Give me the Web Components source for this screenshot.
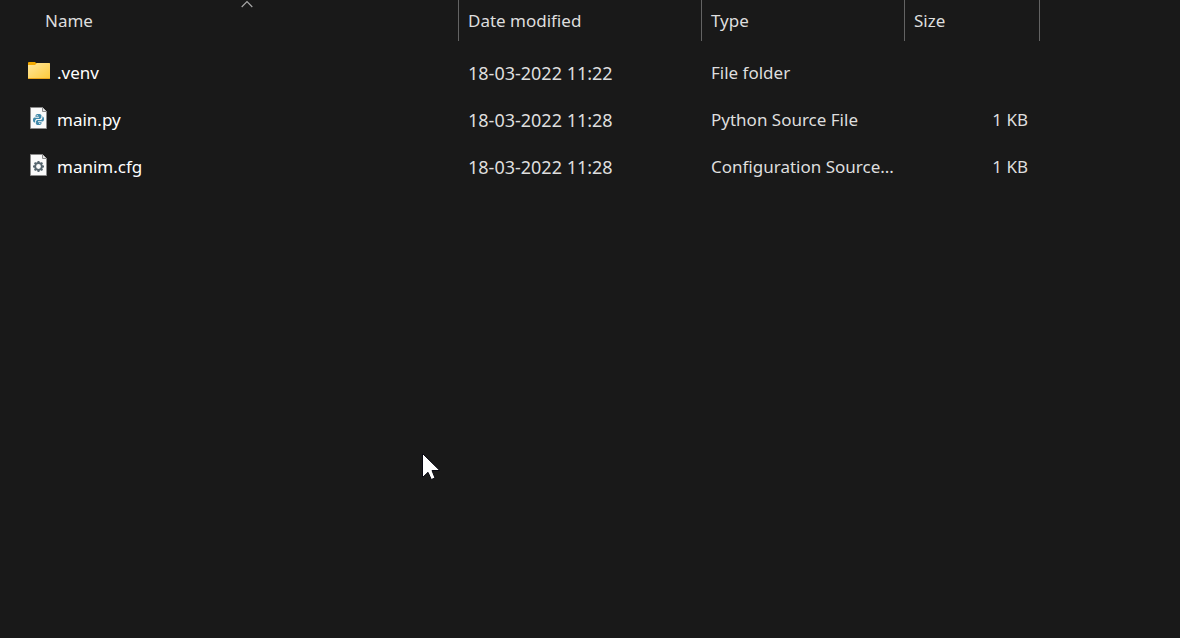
<!DOCTYPE html>
<html lang="en">
<head>
<meta charset="utf-8">
<title>File list</title>
<style>
  html { background: #191919; color-scheme: dark; }
  body { margin: 0; }
</style>
</head>
<body>
<file-browser></file-browser>

<template id="browser-template">
  <style>
    :host {
      display: flex;
      flex-direction: column;
      box-sizing: border-box;
      min-height: 100vh;
      position: relative;
      overflow: hidden;
      background: #191919;
      color: #dedede;
      font: 17px/24px "Noto Sans", "Open Sans", sans-serif;
    }
    mouse-pointer { position: absolute; left: 422px; top: 453px; }
    table { width: 100%; table-layout: fixed; border-collapse: separate; border-spacing: 0; }
    .name { width: 459px; }
    .date { width: 243px; }
    .type { width: 203px; }
    .size { width: 135px; }
    th, td { box-sizing: border-box; padding: 0 10px 0 9px; text-align: left; font-weight: 400; white-space: nowrap; }
    thead th, thead td { height: 41px; padding: 0; }
    tbody td { height: 47px; }
    tbody td:first-child { padding-left: 27px; color: #fff; }
    tbody td:nth-child(2) { font-size: 18px; }
    tbody td:nth-child(4) { text-align: right; padding-right: 12px; }
    tbody::before { content: ""; display: block; height: 8px; }
  </style>
  <table>
    <colgroup><col class="name"><col class="date"><col class="type"><col class="size"><col></colgroup>
    <thead>
      <tr>
        <th scope="col" aria-sort="ascending"><column-header sorted>Name</column-header></th>
        <th scope="col"><column-header>Date modified</column-header></th>
        <th scope="col"><column-header>Type</column-header></th>
        <th scope="col"><column-header>Size</column-header></th>
        <td></td>
      </tr>
    </thead>
    <tbody>
      <tr><td><file-name kind="folder">.venv</file-name></td><td>18-03-2022 11:22</td><td>File folder</td><td></td><td></td></tr>
      <tr><td><file-name kind="python">main.py</file-name></td><td>18-03-2022 11:28</td><td>Python Source File</td><td>1 KB</td><td></td></tr>
      <tr><td><file-name kind="config">manim.cfg</file-name></td><td>18-03-2022 11:28</td><td>Configuration Source...</td><td>1 KB</td><td></td></tr>
    </tbody>
  </table>
  <mouse-pointer></mouse-pointer>
</template>

<template id="header-template">
  <style>
    :host { display: block; position: relative; height: 41px; box-sizing: border-box; border-right: 1px solid #636363; }
    button { display: block; width: 100%; height: 100%; padding: 0 9px; border: 0; background: none; color: inherit; font: inherit; text-align: left; }
    :host([sorted]) button { padding-left: 45px; }
    svg { display: none; position: absolute; top: 0; left: 50%; width: 12px; height: 8px; margin-left: 12px; }
    :host([sorted]) svg { display: block; }
  </style>
  <button type="button"><slot></slot></button>
  <svg viewBox="0 0 12 8" fill="none" stroke="#a8a8a8" stroke-width="1.2" aria-hidden="true"><path d="M.7 7 6 1.7 11.3 7"/></svg>
</template>

<template id="name-template">
  <style>
    :host { display: flex; align-items: center; gap: 6px; }
    svg { flex: none; width: 24px; height: 24px; margin-bottom: 4px; }
  </style>
  <svg viewBox="0 0 24 24" aria-hidden="true"></svg>
  <slot></slot>
</template>

<script>
  const PAGE = `
    <path d="M3.5 1.5H15.5L19.5 5.5V22.5H3.5Z" fill="#fafafa" stroke="#8a8a8a"/>
    <path d="M15.5 1.5V5.5H19.5" fill="#e4e4e4" stroke="#8a8a8a"/>`;

  const ICONS = {
    folder: `
      <defs><linearGradient id="g" x1="0" y1="0" x2="1" y2="1">
        <stop offset="0" stop-color="#ffe79d"/><stop offset="1" stop-color="#ffca3a"/>
      </linearGradient></defs>
      <path d="M1 4Q1 3 2 3H8L9 4H22Q23 4 23 5V11H1Z" fill="#f2a900"/>
      <path d="M1 6H8L10 4H22Q23 4 23 5V19Q23 20 22 20H2Q1 20 1 19Z" fill="url(#g)"/>
      <path d="M1 19H23Q23 20 22 20H2Q1 20 1 19Z" fill="#eda51c"/>`,
    python: PAGE + `
      <g fill="#4089aa">
        <path d="M11.5 8C9.5 8 8.5 8.6 8.5 10V11H12V11.5H7.5C6.5 11.5 6 12.4 6 14S6.6 16.5 7.5 16.5H8.3V15C8.3 13.6 9 13 10.3 13H12.7C13.8 13 14.5 12.4 14.5 11.3V10C14.5 8.6 13.5 8 11.5 8Z"/>
        <path d="M11.5 19C13.5 19 14.5 18.4 14.5 17V16H11V15.5H15.5C16.5 15.5 17 14.6 17 13S16.4 10.5 15.5 10.5H15.2V12C15.2 13.4 14.3 14 13.2 14H10.6C9.5 14 8.8 14.6 8.8 15.7V17C8.8 18.4 9.5 19 11.5 19Z"/>
      </g>
      <path d="M8.4 11.2H12M11 15.8H14.6M8.6 16.8V15.4Q8.6 13.5 10.6 13.5H12.7Q14.9 13.5 14.9 11.6V10.4" fill="none" stroke="#fafafa" stroke-width=".7"/>
      <g fill="#fff"><circle cx="10.2" cy="9.6" r=".6"/><circle cx="12.8" cy="17.4" r=".6"/></g>`,
    config: PAGE + `
      <circle cx="11.5" cy="13.5" r="3.4" fill="none" stroke="#56656e" stroke-width="2"/>
      <g stroke="#56656e" stroke-width="2">
        <path d="M11.5 8V10M11.5 17V19M6 13.5H8M15 13.5H17M7.6 9.6 9 11M14 16 15.4 17.4M15.4 9.6 14 11M9 16 7.6 17.4"/>
      </g>`
  };

  const attach = (host, id) => {
    const root = host.attachShadow({ mode: "open" });
    root.append(document.getElementById(id).content.cloneNode(true));
    return root;
  };

  customElements.define("column-header", class extends HTMLElement {
    constructor() { super(); attach(this, "header-template"); }
  });

  customElements.define("file-name", class extends HTMLElement {
    constructor() { super(); attach(this, "name-template"); }
    connectedCallback() {
      this.shadowRoot.querySelector("svg").innerHTML = ICONS[this.getAttribute("kind")] || PAGE;
    }
  });

  customElements.define("mouse-pointer", class extends HTMLElement {
    constructor() {
      super();
      this.attachShadow({ mode: "open" }).innerHTML = `
        <style>:host { display: block; pointer-events: none; } svg { display: block; width: 19px; height: 28px; }</style>
        <svg viewBox="0 0 19 28" aria-hidden="true">
          <path d="M.5 .5V24.5L6 19.3 9.3 26.5 13 25 10 17.5H17.8Z" fill="#fff" stroke="#080812"/>
        </svg>`;
    }
  });

  customElements.define("file-browser", class extends HTMLElement {
    constructor() { super(); attach(this, "browser-template"); }
  });
</script>
</body>
</html>
